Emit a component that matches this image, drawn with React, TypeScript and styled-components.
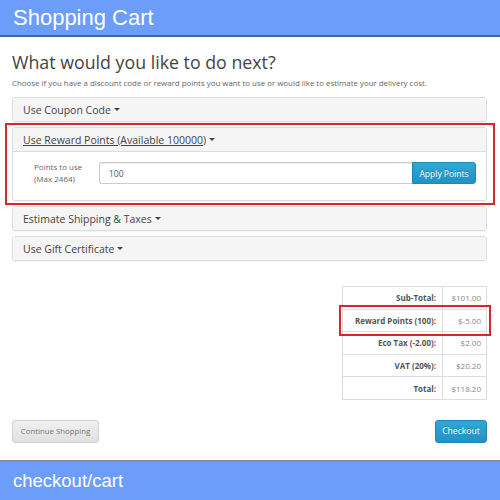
import React from "react";
import styled, { createGlobalStyle } from "styled-components";

const Global = createGlobalStyle`
  html, body { margin: 0; padding: 0; background: #fff; }
  body { width: 500px; height: 500px; overflow: hidden; font-family: "Open Sans", "DejaVu Sans", sans-serif; color: #666; }
  * { box-sizing: border-box; }
`;

const Page = styled.div`
  width: 500px;
  height: 500px;
  display: flex;
  flex-direction: column;
`;

const TopBar = styled.header`
  height: 37px;
  flex: none;
  background: #6c9dfb;
  border-bottom: 2px solid #44629c;
  display: flex;
  align-items: center;
  padding-left: 13px;
  font-family: "Liberation Sans", Arial, sans-serif;
  font-size: 22px;
  color: #fff;
`;

const Content = styled.main`
  flex: 1;
  padding: 0 13px 0 12px;
  display: flex;
  flex-direction: column;
`;

const Heading = styled.h1`
  margin: 13px 0 0;
  font-size: 17.8px;
  font-weight: 400;
  color: #444;
  line-height: 24px;
`;

const Intro = styled.p`
  margin: 3px 0 0;
  font-size: 7.9px;
  line-height: 12px;
  color: #666;
`;

const PanelGroup = styled.div`
  margin-top: 8px;
  display: flex;
  flex-direction: column;
  gap: 5px;
`;

const Panel = styled.div<{ $highlight?: boolean }>`
  position: relative;
  border: 1px solid #ddd;
  border-radius: 3px;
  background: #fff;
  box-shadow: 0 1px 1px rgba(0, 0, 0, 0.05);
  ${(p) =>
    p.$highlight &&
    `
    &::after {
      content: "";
      position: absolute;
      inset: -5px -9px -5px -8px;
      border: 2px solid #d9262b;
      pointer-events: none;
    }
  `}
`;

const PanelHeading = styled.div<{ $open?: boolean }>`
  height: ${(p) => (p.$open ? "24px" : "23px")};
  padding: 0 10px;
  display: flex;
  align-items: center;
  background: #f5f5f5;
  font-size: 10.5px;
  color: #444;
  ${(p) => p.$open && `border-bottom: 1px solid #ddd;`}
`;

const PanelTitle = styled.span<{ $link?: boolean }>`
  text-decoration: ${(p) => (p.$link ? "underline" : "none")};
  display: inline-flex;
  align-items: center;
`;

const Caret = styled.span`
  display: inline-block;
  margin-left: 3px;
  width: 0;
  height: 0;
  border-left: 3px solid transparent;
  border-right: 3px solid transparent;
  border-top: 3.5px solid #444;
`;

const PanelBody = styled.div`
  padding: 9px 10px 15px 21px;
  display: flex;
  align-items: center;
`;

const FieldLabel = styled.label`
  width: 65px;
  flex: none;
  font-size: 8px;
  line-height: 12px;
  color: #666;
`;

const InputGroup = styled.div`
  flex: 1;
  display: flex;
  height: 22px;
`;

const TextInput = styled.div`
  flex: 1;
  border: 1px solid #ccc;
  border-right: none;
  border-radius: 3px 0 0 3px;
  box-shadow: inset 0 1px 1px rgba(0, 0, 0, 0.075);
  padding: 0 9px;
  display: flex;
  align-items: center;
  font-size: 8.5px;
  color: #555;
`;

const BlueButton = styled.button<{ $radius?: string }>`
  font-family: "Open Sans", "DejaVu Sans", sans-serif;
  background: linear-gradient(#2fa8d8, #2391c4);
  border: 1px solid #1f86b8;
  color: #fff;
  border-radius: ${(p) => p.$radius ?? "3px"};
  padding: 0;
  display: flex;
  align-items: center;
  justify-content: center;
  text-shadow: 0 -1px 0 rgba(0, 0, 0, 0.2);
`;

const ApplyButton = styled(BlueButton)`
  width: 64px;
  font-size: 8.5px;
`;

const TotalsWrap = styled.div`
  margin-top: 25px;
  display: flex;
  justify-content: flex-end;
`;

const Totals = styled.table`
  width: 145px;
  border-collapse: collapse;
  font-size: 8px;
`;

const Row = styled.tr<{ $highlight?: boolean }>`
  height: 22.6px;
  ${(p) =>
    p.$highlight &&
    `
    outline: 2px solid #d9262b;
    outline-offset: 2px;
  `}
`;

const LabelCell = styled.td`
  border: 1px solid #ddd;
  text-align: right;
  font-weight: 700;
  color: #555;
  padding: 0 6px;
  width: 100px;
`;

const ValueCell = styled.td`
  border: 1px solid #ddd;
  text-align: right;
  color: #888;
  padding: 0 5px;
`;

const Buttons = styled.div`
  margin-top: 20px;
  display: flex;
  justify-content: space-between;
`;

const GrayButton = styled.button`
  font-family: "Open Sans", "DejaVu Sans", sans-serif;
  width: 87px;
  height: 23px;
  padding: 0;
  font-size: 7.8px;
  color: #777;
  background: linear-gradient(#f0f0f0, #e0e0e0);
  border: 1px solid #d2d2d2;
  border-radius: 3px;
`;

const CheckoutButton = styled(BlueButton)`
  width: 52px;
  height: 23px;
  font-size: 8.6px;
`;

const BottomBar = styled.footer`
  height: 40px;
  flex: none;
  background: #6c9dfb;
  border-top: 2px solid #8a8f99;
  display: flex;
  align-items: center;
  padding-left: 13px;
  font-family: "Liberation Sans", Arial, sans-serif;
  font-size: 18.5px;
  color: #fff;
`;

const rows = [
  { label: "Sub-Total:", value: "$101.00" },
  { label: "Reward Points (100):", value: "$-5.00", highlight: true },
  { label: "Eco Tax (-2.00):", value: "$2.00" },
  { label: "VAT (20%):", value: "$20.20" },
  { label: "Total:", value: "$118.20" },
];

export default function App() {
  return (
    <Page>
      <Global />
      <TopBar>Shopping Cart</TopBar>
      <Content>
        <Heading>What would you like to do next?</Heading>
        <Intro>
          Choose if you have a discount code or reward points you want to use or would like to estimate your delivery cost.
        </Intro>
        <PanelGroup>
          <Panel>
            <PanelHeading>
              <PanelTitle>
                Use Coupon Code <Caret />
              </PanelTitle>
            </PanelHeading>
          </Panel>
          <Panel $highlight>
            <PanelHeading $open>
              <PanelTitle $link>
                Use Reward Points (Available 100000) <Caret />
              </PanelTitle>
            </PanelHeading>
            <PanelBody>
              <FieldLabel>
                Points to use
                <br />
                (Max 2464)
              </FieldLabel>
              <InputGroup>
                <TextInput>100</TextInput>
                <ApplyButton $radius="0 3px 3px 0">Apply Points</ApplyButton>
              </InputGroup>
            </PanelBody>
          </Panel>
          <Panel>
            <PanelHeading>
              <PanelTitle>
                Estimate Shipping &amp; Taxes <Caret />
              </PanelTitle>
            </PanelHeading>
          </Panel>
          <Panel>
            <PanelHeading>
              <PanelTitle>
                Use Gift Certificate <Caret />
              </PanelTitle>
            </PanelHeading>
          </Panel>
        </PanelGroup>
        <TotalsWrap>
          <Totals>
            <tbody>
              {rows.map((r) => (
                <Row key={r.label} $highlight={r.highlight}>
                  <LabelCell>{r.label}</LabelCell>
                  <ValueCell>{r.value}</ValueCell>
                </Row>
              ))}
            </tbody>
          </Totals>
        </TotalsWrap>
        <Buttons>
          <GrayButton>Continue Shopping</GrayButton>
          <CheckoutButton>Checkout</CheckoutButton>
        </Buttons>
      </Content>
      <BottomBar>checkout/cart</BottomBar>
    </Page>
  );
}
